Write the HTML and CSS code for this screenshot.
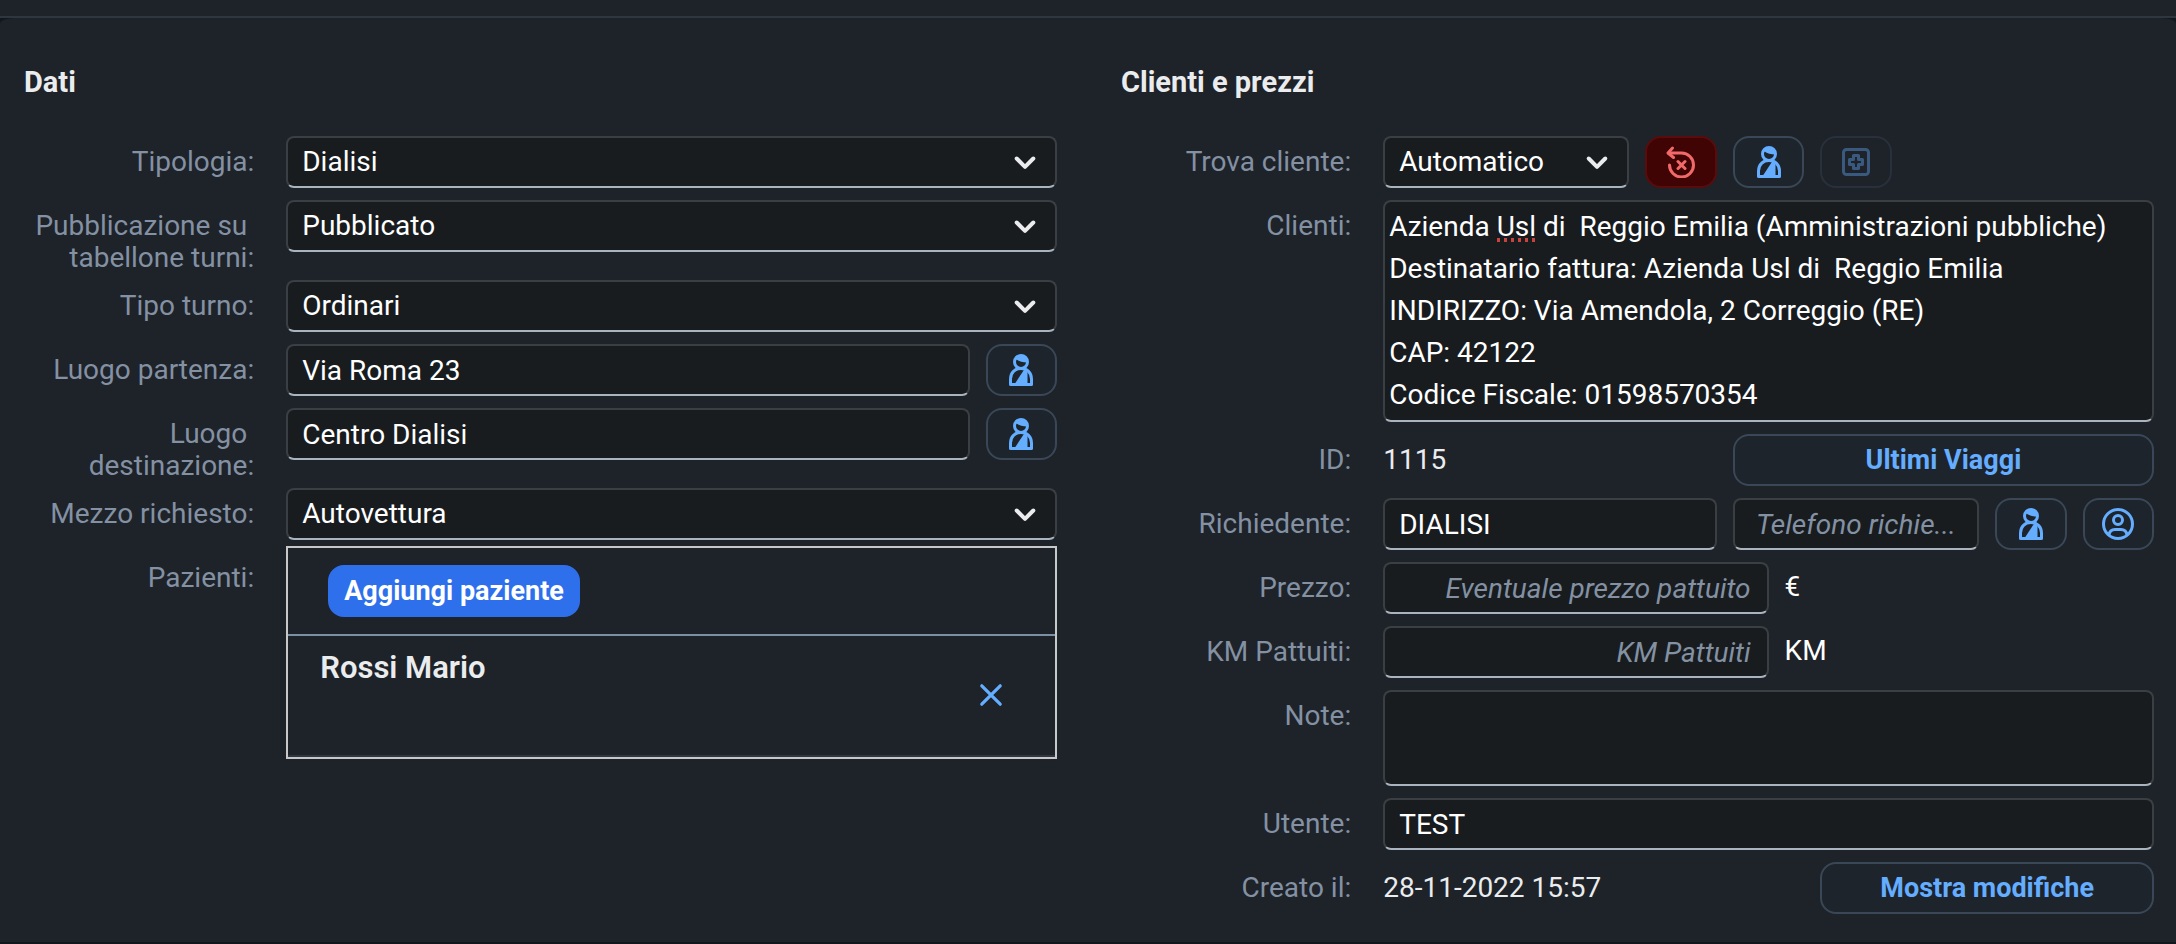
FILE: index.html
```html
<!DOCTYPE html>
<html lang="it">

    <head>
        <meta charset="UTF-8">
        <meta name="viewport" content="width=device-width, initial-scale=1.0">
        <title>Scheda viaggio</title>
        <link rel="stylesheet" href="styles.css">
    </head>

    <body>
        <!-- icone condivise -->
        <svg class="sprite" aria-hidden="true">
            <symbol id="icon-arrow" viewBox="0 0 24 24">
                <path d="M3.7 7.5L12 15.8L20.3 7.5" fill="none" stroke="currentColor" stroke-width="4" stroke-linecap="round" stroke-linejoin="round" />
            </symbol>
            <symbol id="icon-person" viewBox="0 0 32 32">
                <circle cx="16" cy="8" r="6.5" fill="none" stroke="currentColor" stroke-width="3" />
                <path d="M9.5 6C11 1 20 -1 22.5 8.5C18 8.5 14 7.5 11.5 5.5Z" fill="currentColor" />
                <path d="M5.5 30.5V25C5.5 18.5 10 14.5 16 14.5S26.5 18.5 26.5 25V30.5Z" fill="none" stroke="currentColor" stroke-width="3" stroke-linejoin="round" />
                <path d="M9 31L19.5 15L22.500 18V31Z" fill="currentColor" />
            </symbol>
            <symbol id="icon-reset" viewBox="0 0 32 32">
                <path d="M3.5 7H16.5A12 12 0 1 1 4.5 19" fill="none" stroke="currentColor" stroke-width="3" stroke-linecap="round" />
                <path d="M7.5 2L3 7L8.5 11.5M13 15.5L20 22.5M20 15.5L13 22.5" fill="none" stroke="currentColor" stroke-width="3" stroke-linecap="round" stroke-linejoin="round" />
            </symbol>
            <symbol id="icon-add" viewBox="0 0 32 32">
                <rect x="3.5" y="3.5" width="25" height="25" rx="3" fill="none" stroke="currentColor" stroke-width="3" />
                <path d="M13.5 9.5H18.5V13.5H22.5V18.5H18.5V22.5H13.5V18.5H9.5V13.5H13.5Z" fill="none" stroke="currentColor" stroke-width="3" stroke-linejoin="round" />
            </symbol>
            <symbol id="icon-account" viewBox="0 0 32 32">
                <circle cx="16" cy="16" r="14.5" fill="none" stroke="currentColor" stroke-width="3" />
                <circle cx="16" cy="12" r="4.5" fill="none" stroke="currentColor" stroke-width="3" />
                <path d="M7 27C7.5 23.5 10 21.5 13 21.5H19C22 21.5 24.5 23.5 25 27" fill="none" stroke="currentColor" stroke-width="3" />
            </symbol>
            <symbol id="icon-close" viewBox="0 0 24 24">
                <path d="M3.5 3.5L20.5 20.5M20.5 3.5L3.5 20.5" fill="none" stroke="currentColor" stroke-width="3" stroke-linecap="round" />
            </symbol>
        </svg>

        <header class="topbar"></header>

        <form class="panel">
            <section class="group">
                <h2>Dati</h2>

                <div class="row">
                    <label for="tipologia">Tipologia:</label>
                    <div class="select">
                        <select id="tipologia"><option>Dialisi</option></select>
                        <svg class="arrow"><use href="#icon-arrow" /></svg>
                    </div>
                </div>
                <div class="row">
                    <label for="pubblicazione">Pubblicazione su&nbsp;<br>tabellone turni:</label>
                    <div class="select">
                        <select id="pubblicazione"><option>Pubblicato</option></select>
                        <svg class="arrow"><use href="#icon-arrow" /></svg>
                    </div>
                </div>
                <div class="row">
                    <label for="turno">Tipo turno:</label>
                    <div class="select">
                        <select id="turno"><option>Ordinari</option></select>
                        <svg class="arrow"><use href="#icon-arrow" /></svg>
                    </div>
                </div>
                <div class="row">
                    <label for="partenza">Luogo partenza:</label>
                    <div class="fields">
                        <input type="text" id="partenza" class="span-8" value="Via Roma 23">
                        <button type="button" aria-label="Cerca luogo partenza"><svg class="icon"><use href="#icon-person" /></svg></button>
                    </div>
                </div>
                <div class="row">
                    <label for="destinazione">Luogo&nbsp;<br>destinazione:</label>
                    <div class="fields">
                        <input type="text" id="destinazione" class="span-8" value="Centro Dialisi">
                        <button type="button" aria-label="Cerca luogo destinazione"><svg class="icon"><use href="#icon-person" /></svg></button>
                    </div>
                </div>
                <div class="row">
                    <label for="mezzo">Mezzo richiesto:</label>
                    <div class="select">
                        <select id="mezzo"><option>Autovettura</option></select>
                        <svg class="arrow"><use href="#icon-arrow" /></svg>
                    </div>
                </div>
                <div class="row row-list">
                    <span class="label">Pazienti:</span>
                    <div class="patients">
                        <div class="toolbar">
                            <button type="button" class="primary">Aggiungi paziente</button>
                        </div>
                        <div class="patient">
                            <h3>Rossi Mario</h3>
                            <button type="button" class="remove" aria-label="Rimuovi"><svg class="icon-small"><use href="#icon-close" /></svg></button>
                        </div>
                    </div>
                </div>
            </section>

            <section class="group">
                <h2>Clienti e prezzi</h2>

                <div class="row">
                    <label for="trova">Trova cliente:</label>
                    <div class="fields">
                        <div class="select span-3">
                            <select id="trova"><option>Automatico</option></select>
                            <svg class="arrow"><use href="#icon-arrow" /></svg>
                        </div>
                        <button type="button" class="reject" aria-label="Azzera cliente"><svg class="icon"><use href="#icon-reset" /></svg></button>
                        <button type="button" aria-label="Cerca cliente"><svg class="icon"><use href="#icon-person" /></svg></button>
                        <button type="button" aria-label="Aggiungi cliente" disabled><svg class="icon"><use href="#icon-add" /></svg></button>
                    </div>
                </div>
                <div class="row">
                    <label for="clienti">Clienti:</label>
                    <div class="customer">
                        <textarea id="clienti" rows="5" spellcheck="false">Azienda Usl di  Reggio Emilia (Amministrazioni pubbliche)
Destinatario fattura: Azienda Usl di  Reggio Emilia
INDIRIZZO: Via Amendola, 2 Correggio (RE)
CAP: 42122
Codice Fiscale: 01598570354</textarea>
                        <span class="misspelled"></span>
                    </div>
                </div>
                <div class="row">
                    <span class="label">ID:</span>
                    <div class="fields">
                        <span class="value span-4">1115</span>
                        <button type="button" class="span-5">Ultimi Viaggi</button>
                    </div>
                </div>
                <div class="row">
                    <label for="richiedente">Richiedente:</label>
                    <div class="fields">
                        <input type="text" id="richiedente" class="span-4" value="DIALISI">
                        <input type="tel" class="span-3 phone" aria-label="Telefono" placeholder="Telefono richie...">
                        <button type="button" aria-label="Cerca richiedente"><svg class="icon"><use href="#icon-person" /></svg></button>
                        <button type="button" aria-label="Contatto"><svg class="icon"><use href="#icon-account" /></svg></button>
                    </div>
                </div>
                <div class="row">
                    <label for="prezzo">Prezzo:</label>
                    <div class="amount">
                        <input type="text" id="prezzo" placeholder="Eventuale prezzo pattuito">
                        <span class="unit">€</span>
                    </div>
                </div>
                <div class="row">
                    <label for="km">KM Pattuiti:</label>
                    <div class="amount">
                        <input type="text" id="km" placeholder="KM Pattuiti">
                        <span class="unit">KM</span>
                    </div>
                </div>
                <div class="row">
                    <label for="note">Note:</label>
                    <textarea id="note" rows="2"></textarea>
                </div>
                <div class="row">
                    <label for="utente">Utente:</label>
                    <input type="text" id="utente" value="TEST">
                </div>
                <div class="row">
                    <span class="label">Creato il:</span>
                    <div class="fields">
                        <span class="value span-5">28-11-2022 15:57</span>
                        <button type="button" class="span-4">Mostra modifiche</button>
                    </div>
                </div>
            </section>
        </form>
    </body>

</html>
```
FILE: styles.css
```css
* {
    box-sizing: border-box;
}

body {
    margin: 0;
    background: #12171c;
    color: #eaecee;
    font-family: Roboto, "Liberation Sans", sans-serif;
    font-size: 28px;
    line-height: 32px;
}

.sprite {
    display: none;
}

.topbar {
    height: 18px;
    background: #1e2229;
    border-bottom: 2px solid #2f363f;
}

.panel {
    display: grid;
    grid-template-columns: 1fr 1fr;
    gap: 64px;
    padding: 0 22px 22px 24px;
    background: #1e2229;
    border-radius: 14px 14px 0 0 / 6px 6px 0 0;
    margin-bottom: 2px;
}

.group {
    min-width: 0;
}

h2 {
    margin: 0;
    padding: 48px 0 32px;
    font-size: 29px;
    line-height: 32px;
    font-weight: 700;
}

/* righe etichetta + campo */
.row {
    display: grid;
    grid-template-columns: 23fr 77fr;
    column-gap: 32px;
    align-items: start;
    padding-top: 6px;
    min-height: 64px;
}

.row > * {
    min-width: 0;
}

.row > label,
.row > .label {
    padding-top: 10px;
    color: #8391a3;
    text-align: right;
}

.row > :last-child {
    margin-bottom: 6px;
}

.fields {
    display: grid;
    grid-template-columns: repeat(9, 1fr);
    column-gap: 16px;
}

.span-3 {
    grid-column: span 3;
}

.span-4 {
    grid-column: span 4;
}

.span-5 {
    grid-column: span 5;
}

.span-8 {
    grid-column: span 8;
}

input,
select,
textarea {
    display: block;
    width: 100%;
    min-width: 0;
    height: 52px;
    margin: 0;
    padding: 0 14px;
    background: #181c1f;
    border: 2px solid #3a3f43;
    border-bottom-color: #a9b4be;
    border-radius: 8px;
    color: #fff;
    font: inherit;
    outline: none;
    appearance: none;
}

textarea {
    height: auto;
    padding: 4px;
    line-height: 42px;
    resize: none;
    overflow: hidden;
}

::placeholder {
    color: #8391a3;
    font-style: italic;
    opacity: 1;
}

.select,
.customer {
    position: relative;
}

.arrow {
    position: absolute;
    top: 15px;
    right: 20px;
    width: 24px;
    height: 24px;
    color: #eaecee;
    pointer-events: none;
}

/* puntini del correttore ortografico */
.misspelled {
    position: absolute;
    top: 38px;
    left: 112px;
    width: 42px;
    height: 4px;
    background: radial-gradient(circle, #c8433c 2px, transparent 2px) 0 0 / 7px 4px;
}

button {
    display: flex;
    align-items: center;
    justify-content: center;
    height: 52px;
    min-width: 0;
    margin: 0;
    padding: 0;
    background: #1e242b;
    border: 2px solid #394756;
    border-radius: 16px;
    color: #64adff;
    font: inherit;
    font-size: 27px;
    font-weight: 700;
    cursor: pointer;
}

button:disabled {
    opacity: 0.4;
    cursor: default;
}

.reject {
    background: #400404;
    border-color: #5a0c0c;
    color: #f16a6a;
}

.primary {
    padding: 0 14px;
    background: #2e6fec;
    border-color: #2e6fec;
    color: #fff;
}

.icon {
    width: 32px;
    height: 32px;
}

.icon-small {
    width: 26px;
    height: 26px;
}

.value {
    padding-top: 10px;
}

.phone {
    text-align: center;
}

.amount {
    display: flex;
    gap: 16px;
}

.amount input {
    width: 50%;
    padding-right: 16px;
    text-align: right;
}

.unit {
    padding-top: 9px;
    color: #fff;
}

/* elenco pazienti */
.row-list {
    padding-top: 0;
}

.row-list > .label {
    padding-top: 16px;
}

.patients {
    border: 2px solid #c8c8c8;
}

.toolbar {
    padding: 17px 40px;
    border-bottom: 2px solid #7b8fa5;
}

.patient {
    display: flex;
    justify-content: space-between;
    padding: 12px 32px 14px;
    height: 121px;
    border-bottom: 2px solid #2f363f;
}

h3 {
    margin: 0;
    font-size: 31px;
    line-height: 40px;
    font-weight: 600;
}

.remove {
    align-self: center;
    width: 64px;
    background: none;
    border-color: transparent;
}
```
